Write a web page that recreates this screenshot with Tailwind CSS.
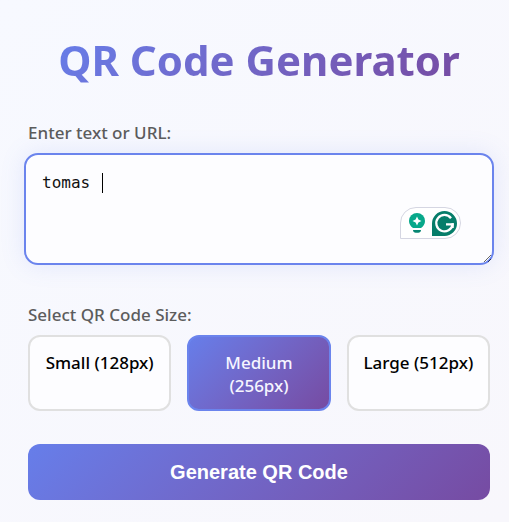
<!DOCTYPE html>
<html lang="en">
<head>
<meta charset="utf-8">
<meta name="viewport" content="width=device-width, initial-scale=1">
<title>QR Code Generator</title>
<script src="https://cdn.jsdelivr.net/npm/@tailwindcss/browser@4"></script>
</head>
<body class="min-h-screen bg-linear-135 from-[#f7f9ff] to-[#f8f7fc] font-['Noto_Sans',sans-serif] text-[17px]">
<main class="pt-[30px] pr-[19px] pb-5 pl-7">
  <h1 class="mb-[33px] text-center text-[42px] leading-[60px] font-bold"><span class="bg-linear-135 from-[#667eea] to-[#764ba2] bg-clip-text text-transparent">QR Code Generator</span></h1>
  <form>
    <label for="text" class="mb-[10px] block leading-5 font-medium text-[#5c5c5c]">Enter text or URL:</label>
    <div class="relative -mx-1">
      <textarea id="text" class="block h-28 w-full resize-y rounded-[14px] border-2 border-[#6b84ed] bg-[#fdfdff] px-4 py-4 font-['DejaVu_Sans_Mono',monospace] text-base leading-6 text-[#111] shadow-[0_0_24px_#667eea26] outline-none">tomas </textarea>
      <span class="absolute top-5 left-[78px] h-5 w-px bg-black"></span>
      <div class="absolute right-[33px] bottom-[26px] flex h-8 w-[61px] items-center rounded-t-2xl rounded-br-2xl border border-[#d5d6e2] bg-white">
        <svg class="ml-2 h-5 w-4" viewBox="0 0 16 20" aria-hidden="true"><path fill="#08a88a" d="M8 0a8 8 0 0 0-8 8c0 3.200 1.700 5.300 4 7h8c2.300-1.700 4-3.800 4-7a8 8 0 0 0-8-8Z"/><path fill="#fff" d="M8 3.500 9.400 6.600 12.500 8 9.400 9.400 8 12.500 6.600 9.400 3.500 8 6.600 6.600Z"/><path fill="#078673" d="M4 17h8c0 1.800-1.300 2.800-2.600 2.800H6.600C5.300 19.800 4 18.800 4 17Z"/></svg>
        <svg class="ml-[7px] h-[25px] w-[25px]" viewBox="0 0 25 25" aria-hidden="true"><path fill="#067d6a" d="M12.500 0A12.500 12.500 0 0 1 12.500 25H0V12.500A12.500 12.500 0 0 1 12.500 0Z"/><path fill="none" stroke="#fff" stroke-width="2.300" d="M19 7.200A8.200 8.200 0 1 0 20.600 13.300H14"/><path fill="none" stroke="#fff" stroke-width="2.300" d="M20.600 12.200V17"/></svg>
      </div>
    </div>
    <h2 id="size-label" class="mt-10 mb-[10px] leading-5 font-medium text-[#5c5c5c]">Select QR Code Size:</h2>
    <div role="group" aria-labelledby="size-label" class="grid grid-cols-3 gap-4 leading-[23px] font-medium text-black">
      <button type="button" class="flex min-h-[76px] justify-center rounded-xl border-2 border-[#e0e0e0] bg-[#fdfdff] px-2 pt-[14px]">Small (128px)</button>
      <button type="button" aria-pressed="true" class="flex min-h-[76px] justify-center rounded-xl border-2 border-[#6b84ed] bg-linear-135 from-[#667eea] to-[#764ba2] px-4 pt-[14px] text-[#f6f5ff]">Medium (256px)</button>
      <button type="button" class="flex min-h-[76px] justify-center rounded-xl border-2 border-[#e0e0e0] bg-[#fdfdff] px-2 pt-[14px]">Large (512px)</button>
    </div>
    <button type="submit" class="mt-[33px] h-14 w-full rounded-xl bg-linear-135 from-[#667eea] to-[#764ba2] font-['Liberation_Sans',sans-serif] text-xl font-bold text-white">Generate QR Code</button>
  </form>
</main>
</body>
</html>
